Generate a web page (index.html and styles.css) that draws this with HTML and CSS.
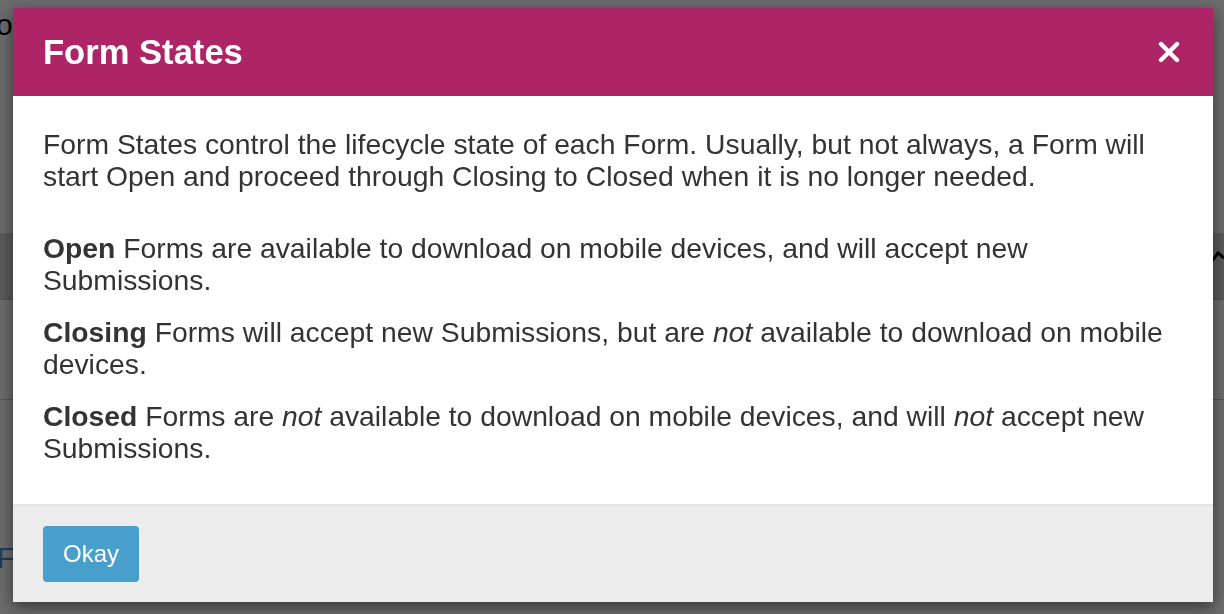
FILE: index.html
```html
<!DOCTYPE html>
<html lang="en">
<head>
    <meta charset="UTF-8">
    <meta name="viewport" content="width=device-width, initial-scale=1.0">
    <title>Form States</title>
    <link rel="stylesheet" href="styles.css">
</head>
<body>
    <!-- page underneath the backdrop -->
    <div class="page">
        <div class="page-top">o</div>
        <div class="page-band">
            <svg class="chevron" width="14" height="22" viewBox="0 0 14 22">
                <path d="M2 16 L8 8 L14 13" fill="none" stroke="#000" stroke-width="3"/>
            </svg>
        </div>
        <div class="page-row"></div>
        <div class="page-row page-row-last"><span class="page-link">F</span></div>
    </div>

    <div class="backdrop">
        <div class="modal">
            <div class="modal-header">
                <h1>Form States</h1>
                <button class="close" aria-label="Close">
                    <svg width="22" height="22" viewBox="0 0 22 22">
                        <path d="M3 3 L19 19 M19 3 L3 19" stroke="#fff" stroke-width="4.4" stroke-linecap="round"/>
                    </svg>
                </button>
            </div>
            <div class="modal-body">
                <p class="intro">Form States control the lifecycle state of each Form. Usually, but not always, a Form will start Open and proceed through Closing to Closed when it is no longer needed.</p>
                <p><strong>Open</strong> Forms are available to download on mobile devices, and will accept new Submissions.</p>
                <p><strong>Closing</strong> Forms will accept new Submissions, but are <em>not</em> available to download on mobile devices.</p>
                <p><strong>Closed</strong> Forms are <em>not</em> available to download on mobile devices, and will <em>not</em> accept new Submissions.</p>
            </div>
            <div class="modal-footer">
                <button class="btn-okay">Okay</button>
            </div>
        </div>
    </div>
</body>
</html>
```

FILE: styles.css
```css
html, body {
    margin: 0;
    padding: 0;
    height: 100%;
    overflow: hidden;
}
body {
    font-family: "Liberation Sans", Arial, sans-serif;
    background-color: #fff;
    color: #333;
}
.page {
    display: flex;
    flex-direction: column;
    height: 614px;
}
.page-top {
    height: 233px;
    font-size: 30px;
    line-height: 50px;
    color: #000;
    margin-left: -4px;
}
.page-band {
    height: 66px;
    background-color: #d6d6d6;
    border-bottom: 1px solid #bdbdbd;
    display: flex;
    justify-content: flex-end;
    align-items: flex-start;
}
.chevron {
    margin-top: 12px;
}
.page-row {
    height: 99px;
    border-bottom: 1px solid #c8c8c8;
}
.page-row-last {
    flex: 1;
    border-bottom: none;
    padding-top: 142px;
}
.page-link {
    font-size: 29px;
    color: #4a92d4;
    margin-left: -3px;
}
.backdrop {
    position: fixed;
    inset: 0;
    background-color: rgba(0, 0, 0, 0.58);
}
.modal {
    position: absolute;
    top: 8px;
    left: 13px;
    width: 1200px;
    background-color: #fff;
    box-shadow: 0 5px 15px rgba(0, 0, 0, 0.5);
}
.modal-header {
    height: 88px;
    background-color: #ad2567;
    display: flex;
    align-items: center;
    justify-content: space-between;
    padding: 0 33px 0 30px;
    box-sizing: border-box;
}
.modal-header h1 {
    margin: 0;
    font-size: 34.6px;
    font-weight: bold;
    color: #fff;
}
.close {
    background: none;
    border: none;
    padding: 0;
    width: 22px;
    height: 22px;
    cursor: pointer;
    display: flex;
}
.modal-body {
    padding: 32px 30px 20px;
    font-size: 28.3px;
    line-height: 32px;
}
.modal-body p {
    margin: 0 0 20px;
}
.modal-body p.intro {
    margin-bottom: 40px;
}
.modal-footer {
    background-color: #ececec;
    border-top: 2px solid #e4e4e4;
    padding: 20px 30px 20px;
}
.btn-okay {
    font-family: "Liberation Sans", Arial, sans-serif;
    font-size: 24px;
    color: #fff;
    background-color: #499fcb;
    border: none;
    border-radius: 4px;
    width: 96px;
    height: 56px;
    cursor: pointer;
}
```
